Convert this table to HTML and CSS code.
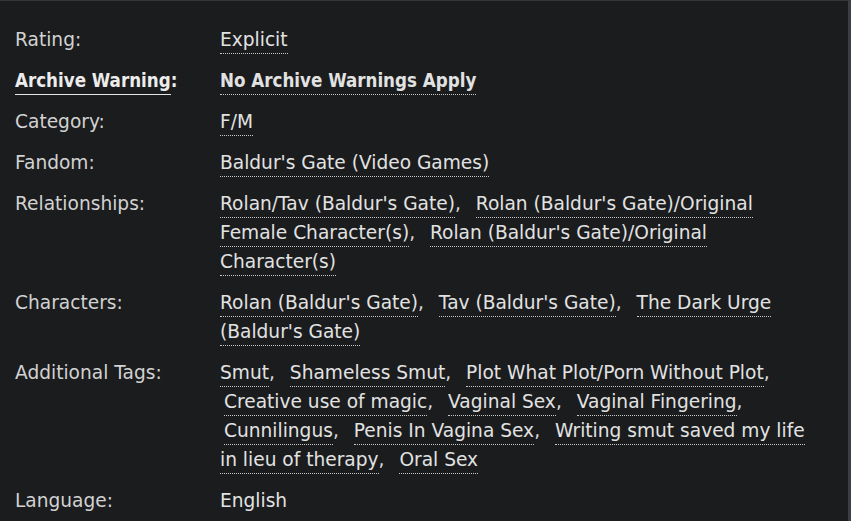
FILE: index.html
```html
<!DOCTYPE html>
<html>
<head>
<meta charset="utf-8">
<link rel="stylesheet" href="styles.css">
</head>
<body>
<div class="frame">
  <dl class="meta">
    <dt>Rating:</dt>
    <dd><ul class="tags"><li><a class="tag">Explicit</a></li></ul></dd>

    <dt class="warning"><span class="wlabel">Archive Warning</span>:</dt>
    <dd class="warning"><ul class="tags"><li><a class="tag">No Archive Warnings Apply</a></li></ul></dd>

    <dt>Category:</dt>
    <dd><ul class="tags"><li><a class="tag">F/M</a></li></ul></dd>

    <dt>Fandom:</dt>
    <dd><ul class="tags"><li><a class="tag">Baldur's Gate (Video Games)</a></li></ul></dd>

    <dt>Relationships:</dt>
    <dd><ul class="tags commas">
      <li><a class="tag">Rolan/Tav (Baldur's Gate)</a></li>
      <li><a class="tag">Rolan (Baldur's Gate)/Original Female Character(s)</a></li>
      <li><a class="tag">Rolan (Baldur's Gate)/Original Character(s)</a></li>
    </ul></dd>

    <dt>Characters:</dt>
    <dd><ul class="tags commas">
      <li><a class="tag">Rolan (Baldur's Gate)</a></li>
      <li><a class="tag">Tav (Baldur's Gate)</a></li>
      <li><a class="tag">The Dark Urge (Baldur's Gate)</a></li>
    </ul></dd>

    <dt>Additional Tags:</dt>
    <dd><ul class="tags commas">
      <li><a class="tag">Smut</a></li>
      <li><a class="tag">Shameless Smut</a></li>
      <li><a class="tag">Plot What Plot/Porn Without Plot</a></li>
      <li><a class="tag">Creative use of magic</a></li>
      <li><a class="tag">Vaginal Sex</a></li>
      <li><a class="tag">Vaginal Fingering</a></li>
      <li><a class="tag">Cunnilingus</a></li>
      <li><a class="tag">Penis In Vagina Sex</a></li>
      <li><a class="tag">Writing smut saved my life in lieu of therapy</a></li>
      <li><a class="tag">Oral Sex</a></li>
    </ul></dd>

    <dt>Language:</dt>
    <dd class="plain">English</dd>
  </dl>
</div>
</body>
</html>
```
FILE: styles.css
```css
html, body {
  margin: 0;
  padding: 0;
  background: #1b1c1e;
  height: 100%;
}
body {
  font-family: "DejaVu Sans", Verdana, sans-serif;
  font-size: 18.6px;
  line-height: 29px;
  color: #d9d9d9;
  overflow: hidden;
}
.frame {
  box-sizing: border-box;
  height: 521px;
  border-top: 1px solid #34363a;
  border-right: 3px solid #3b3e42;
  padding: 24px 0 0 15px;
}
.meta {
  margin: 0;
  display: grid;
  grid-template-columns: 205px 595px;
  row-gap: 12px;
}
.meta dt {
  margin: 0;
  color: #d2d2d2;
}
.meta dd {
  margin: 0;
}
.tags {
  list-style: none;
  margin: 0;
  padding: 0;
  display: inline;
}
.tags li {
  display: inline;
}
.commas li + li {
  padding-left: 4px;
}
.commas li::after {
  content: ",";
  margin-right: 5px;
}
.commas li:last-child::after {
  content: "";
  margin: 0;
}
.tag {
  color: #e2e2e2;
  text-decoration: none;
  border-bottom: 1px dotted #c8c8c8;
  padding-bottom: 3px;
}
.warning .tag,
dt.warning {
  font-family: "DejaVu Sans Condensed", "DejaVu Sans", sans-serif;
  font-stretch: condensed;
  font-weight: bold;
}
dt.warning {
  color: #ececec;
}
.wlabel {
  border-bottom: 1px solid #e6e6e6;
  padding-bottom: 3px;
}
.plain {
  color: #e2e2e2;
}
```
